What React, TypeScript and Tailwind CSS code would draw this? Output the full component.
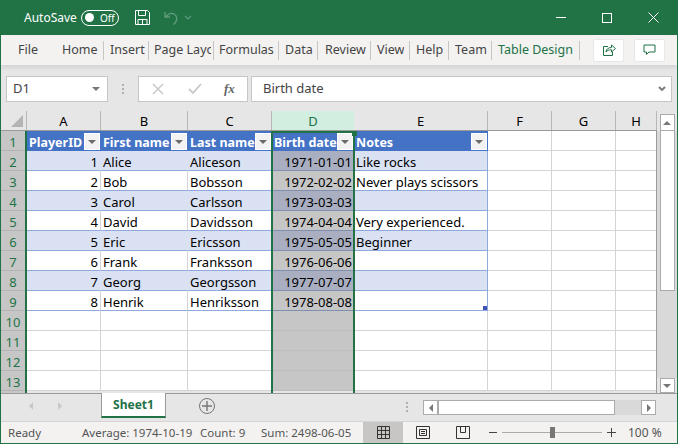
const font = { fontFamily: '"Noto Sans", sans-serif' };

const tabs = [
  { label: "Home", w: "w-[49px]", pl: "pl-[7px]" },
  { label: "Insert", w: "w-[45px]", pl: "pl-[6px]" },
  { label: "Page Layout", w: "w-[65px]", pl: "pl-[5px]" },
  { label: "Formulas", w: "w-[65px]", pl: "pl-[5px]" },
  { label: "Data", w: "w-[39px]", pl: "pl-[6px]" },
  { label: "Review", w: "w-[53px]", pl: "pl-[7px]" },
  { label: "View", w: "w-[39px]", pl: "pl-[6px]" },
  { label: "Help", w: "w-[39px]", pl: "pl-[6px]" },
  { label: "Team", w: "w-[43px]", pl: "pl-[6px]" },
];

const columns = [
  { name: "A", w: "w-[74px]" },
  { name: "B", w: "w-[87px]" },
  { name: "C", w: "w-[84px]" },
  { name: "D", w: "w-[82px]" },
  { name: "E", w: "w-[134px]" },
  { name: "F", w: "w-[64px]" },
  { name: "G", w: "w-[64px]" },
  { name: "H", w: "w-[41px]" },
];

const players = [
  ["1", "Alice", "Aliceson", "1971-01-01", "Like rocks"],
  ["2", "Bob", "Bobsson", "1972-02-02", "Never plays scissors"],
  ["3", "Carol", "Carlsson", "1973-03-03", ""],
  ["4", "David", "Davidsson", "1974-04-04", "Very experienced."],
  ["5", "Eric", "Ericsson", "1975-05-05", "Beginner"],
  ["6", "Frank", "Franksson", "1976-06-06", ""],
  ["7", "Georg", "Georgsson", "1977-07-07", ""],
  ["8", "Henrik", "Henriksson", "1978-08-08", ""],
];

function FilterButton() {
  return (
    <span className="absolute right-[1px] top-[2px] flex h-[17px] w-[16px] items-center justify-center bg-[#f2f2f2] border border-white">
      <span className="h-0 w-0 border-x-[4px] border-t-[4px] border-x-transparent border-t-[#6b6b6b]" />
    </span>
  );
}

function HeaderCell({ label, w }: { label: string; w: string }) {
  return (
    <div className={`${w} relative h-full bg-[#4472c4] pl-[2px] text-[12.5px] font-bold text-white leading-[24px] whitespace-nowrap`}>
      {label}
      <FilterButton />
    </div>
  );
}

function DataRow({ num, row }: { num: number; row: string[] }) {
  const band = num % 2 === 0;
  const tableBg = band ? "bg-[#d9e1f2]" : "bg-white";
  const line = "border-b border-[#8ea9db]";
  return (
    <div className="flex h-[20px] leading-[23px] text-black">
      <div className={`${columns[0].w} ${tableBg} ${line} border-r ${band ? "border-r-[#d9e1f2]" : "border-r-[#d4d4d4]"} pr-[2px] text-right`}>{row[0]}</div>
      <div className={`${columns[1].w} ${tableBg} ${line} border-r ${band ? "border-r-[#d9e1f2]" : "border-r-[#d4d4d4]"} pl-[2px]`}>{row[1]}</div>
      <div className={`${columns[2].w} ${tableBg} ${line} pl-[2px]`}>{row[2]}</div>
      <div className={`${columns[3].w} ${band ? "bg-[#a9afc0]" : "bg-[#c6c6c6]"} border-b border-[#7f8fb0] pr-[2px] text-right`}>{row[3]}</div>
      <div className={`${columns[4].w} ${tableBg} ${line} border-r border-r-[#8ea9db] pl-[2px] whitespace-nowrap relative`}>
        {row[4]}
        {num === 9 && <span className="absolute bottom-0 right-0 h-[4px] w-[4px] bg-[#3f51b5]" />}
      </div>
      <div className={`${columns[5].w} border-r border-b border-[#d4d4d4] bg-white`} />
      <div className={`${columns[6].w} border-r border-b border-[#d4d4d4] bg-white`} />
      <div className={`${columns[7].w} border-b border-[#d4d4d4] bg-white`} />
    </div>
  );
}

function EmptyRow() {
  return (
    <div className="flex h-[20px]">
      {columns.map((c) => (
        <div
          key={c.name}
          className={`${c.w} ${c.name === "D" ? "bg-[#c6c6c6] border-b border-[#bdbdbd]" : "bg-white border-r border-b border-[#d4d4d4]"}`}
        />
      ))}
    </div>
  );
}

export default function App() {
  return (
    <div className="flex h-[444px] w-[678px] flex-col overflow-hidden bg-[#e6e6e6] border-x border-b border-[#217346] text-[13px] text-[#444]" style={font}>
      {/* Title bar */}
      <div className="-mx-px flex h-[35px] shrink-0 items-center bg-[#217346] text-white">
        <span className="ml-[24px] w-[57px] shrink-0 text-[12px]">AutoSave</span>
        <div className="flex h-[16px] w-[38px] shrink-0 items-center rounded-full border border-white pl-[3px]">
          <span className="h-[9px] w-[9px] rounded-full bg-white" />
          <span className="ml-[6px] text-[10px] leading-none">Off</span>
        </div>
        <svg className="ml-[15px]" width="17" height="17" viewBox="0 0 17 17" fill="none" stroke="white" strokeWidth="1">
          <path d="M1.5 1.5h12l2 2v12h-14z" />
          <path d="M4.5 1.5v5h7v-5M4 15.500v-5h9v5M8.500 11v4" />
        </svg>
        <svg className="ml-[12px]" width="18" height="18" viewBox="0 0 18 18" fill="none" stroke="#5f9b7c" strokeWidth="1.4">
          <path d="M2 3v5h5M2.500 8C5 5 8 3.500 11 5c3.500 2 3.500 6 1 9l-1.500 1.500" />
        </svg>
        <svg className="ml-[3px]" width="8" height="6" viewBox="0 0 8 6" fill="none" stroke="#5f9b7c" strokeWidth="1.2">
          <path d="M1 1l3 3 3-3" />
        </svg>
        <div className="ml-auto flex items-center">
          <span className="mr-[36px] h-px w-[10px] bg-white" />
          <span className="mr-[36px] h-[10px] w-[10px] border border-white" />
          <svg className="mr-[19px]" width="11" height="11" viewBox="0 0 11 11" stroke="white" strokeWidth="1">
            <path d="M0.500 0.500l10 10M10.500 0.500l-10 10" />
          </svg>
        </div>
      </div>

      {/* Ribbon tabs */}
      <div className="relative flex h-[30px] shrink-0 items-center bg-[#f3f2f1] text-[12.5px] shadow-[0_3px_4px_rgba(0,0,0,0.08)]">
        <span className="ml-[17px] mt-px w-[37px] shrink-0">File</span>
        {tabs.map((t) => (
          <div key={t.label} className={`${t.w} ${t.pl} flex h-[19px] shrink-0 items-center whitespace-nowrap border-r border-[#c8c6c4] pr-[2px]`}>
            <span className="mt-px overflow-hidden">{t.label}</span>
          </div>
        ))}
        <div className="flex h-[19px] w-[88px] shrink-0 items-center whitespace-nowrap border-r border-[#c8c6c4] pl-[6px] text-[#217346]">
          <span className="mt-px">Table Design</span>
        </div>
        <div className="ml-[13px] flex h-[23px] w-[31px] items-center justify-center rounded-[2px] bg-white border border-[#e8e8e8]">
          <svg width="14" height="14" viewBox="0 0 14 14" fill="none" stroke="#217346" strokeWidth="1">
            <path d="M6 3.500H1.500v9h9V9M4 9c0-3 2.500-4.500 5.500-4.500V2l4 3.500-4 3.500V6.800C7 6.800 5 7.500 4 9z" />
          </svg>
        </div>
        <div className="ml-[10px] flex h-[23px] w-[31px] items-center justify-center rounded-[2px] bg-white border border-[#e8e8e8]">
          <svg width="13" height="12" viewBox="0 0 13 12" fill="none" stroke="#217346" strokeWidth="1">
            <path d="M1 1h11v7H6l-2.500 2.500V8H1z" />
          </svg>
        </div>
      </div>

      {/* Formula bar */}
      <div className="flex h-[46px] shrink-0 items-start pt-[11px]">
        <div className="ml-[5px] flex h-[26px] w-[102px] items-center justify-between border border-[#c6c6c6] bg-white pl-[6px] pr-[7px]">
          D1
          <span className="h-0 w-0 border-x-[4px] border-t-[4px] border-x-transparent border-t-[#777]" />
        </div>
        <div className="mx-[14px] mt-[8px] flex flex-col gap-[2px]">
          <span className="h-[2px] w-[2px] bg-[#b0b0b0]" />
          <span className="h-[2px] w-[2px] bg-[#b0b0b0]" />
          <span className="h-[2px] w-[2px] bg-[#b0b0b0]" />
        </div>
        <div className="flex h-[26px] w-[110px] items-center border border-[#c6c6c6] bg-white pl-[13px]">
          <svg width="12" height="12" viewBox="0 0 12 12" stroke="#c8c8c8" strokeWidth="1.5">
            <path d="M1 1l10 10M11 1L1 11" />
          </svg>
          <svg className="ml-[24px]" width="14" height="12" viewBox="0 0 14 12" fill="none" stroke="#c8c8c8" strokeWidth="1.8">
            <path d="M1 6l4 4 8-9" />
          </svg>
          <span className="ml-[22px] text-[13px] font-bold italic text-[#666]" style={{ fontFamily: '"Liberation Serif", serif' }}>
            fx
          </span>
        </div>
        <div className="ml-[3px] flex h-[26px] w-[421px] items-center justify-between border border-[#c6c6c6] bg-white pl-[11px] pr-[5px]">
          Birth date
          <svg width="8" height="6" viewBox="0 0 8 6" fill="none" stroke="#777" strokeWidth="1.8">
            <path d="M1 1l3 3 3-3" />
          </svg>
        </div>
      </div>

      {/* Sheet area */}
      <div className="flex min-h-0 flex-1">
        <div className="flex w-[656px] shrink-0 flex-col border-r border-[#9a9a9a]">
          <div className="relative flex h-[20px] shrink-0 border-b border-[#9a9a9a] leading-[20px] text-black">
            <div className="relative w-[26px] shrink-0 border-r border-[#b8b8b8]">
              <span className="absolute bottom-[3px] right-[3px] h-0 w-0 border-b-[12px] border-l-[12px] border-b-[#b4b4b4] border-l-transparent" />
            </div>
            {columns.map((c) => (
              <div
                key={c.name}
                className={`${c.w} shrink-0 text-center ${c.name === "D" ? "bg-[#d2eee0] text-[#217346]" : "border-r border-[#b8b8b8]"}`}
              >
                {c.name}
              </div>
            ))}
          </div>
          <div className="relative flex min-h-0 flex-1 overflow-hidden">
            <div className="w-[26px] shrink-0 border-r-2 border-[#217346] bg-[#c6c6c6] text-[#217346]">
              {Array.from({ length: 13 }).map((_, i) => (
                <div key={i} className="h-[20px] border-b border-[#b4b4b4] text-center leading-[23px]">
                  {i + 1}
                </div>
              ))}
            </div>
            <div className="flex-1">
              <div className="flex h-[20px]">
                <HeaderCell label="PlayerID" w={columns[0].w} />
                <HeaderCell label="First name" w={columns[1].w} />
                <HeaderCell label="Last name" w={columns[2].w} />
                <HeaderCell label="Birth date" w={columns[3].w} />
                <HeaderCell label="Notes" w={columns[4].w} />
                <div className={`${columns[5].w} border-r border-b border-[#d4d4d4] bg-white`} />
                <div className={`${columns[6].w} border-r border-b border-[#d4d4d4] bg-white`} />
                <div className={`${columns[7].w} border-b border-[#d4d4d4] bg-white`} />
              </div>
              {players.map((row, i) => (
                <DataRow key={row[0]} num={i + 2} row={row} />
              ))}
              {Array.from({ length: 4 }).map((_, i) => (
                <EmptyRow key={i} />
              ))}
            </div>
            {/* Selected column outline */}
            <div className="absolute bottom-0 left-[270px] top-0 w-[84px] border-x-2 border-t-2 border-[#217346]">
              <span className="absolute right-[-4px] top-[-2px] h-[5px] w-[5px] bg-[#217346]" />
            </div>
          </div>
        </div>

        {/* Vertical scrollbar */}
        <div className="flex w-[20px] shrink-0 flex-col items-center pt-[3px]">
          <div className="flex h-[17px] w-[15px] shrink-0 items-center justify-center border border-[#ababab] bg-white">
            <span className="h-0 w-0 border-x-[4px] border-b-[4px] border-x-transparent border-b-[#777]" />
          </div>
          <div className="flex w-full flex-1 flex-col items-center bg-[#d9d9d9]">
            <div className="h-[160px] w-[15px] border border-[#ababab] border-t-0 bg-white" />
          </div>
          <div className="flex h-[15px] w-[15px] shrink-0 items-center justify-center border border-[#ababab] bg-white">
            <span className="h-0 w-0 border-x-[4px] border-t-[4px] border-x-transparent border-t-[#777]" />
          </div>
        </div>
      </div>

      {/* Sheet tabs */}
      <div className="flex h-[28px] shrink-0 items-start border-t border-[#9a9a9a]">
        <span className="ml-[28px] mt-[8px] h-0 w-0 border-y-[4px] border-r-[4px] border-y-transparent border-r-[#c8c8c8]" />
        <span className="ml-[25px] mt-[8px] h-0 w-0 border-y-[4px] border-l-[4px] border-y-transparent border-l-[#c8c8c8]" />
        <div className="-mt-px ml-[39px] flex h-[25px] w-[65px] items-center justify-center border-x border-b-2 border-x-[#9a9a9a] border-b-[#217346] bg-white text-[12px] font-bold text-[#217346]">
          Sheet1
        </div>
        <div className="ml-[33px] mt-[4px] flex h-[16px] w-[16px] items-center justify-center rounded-full border border-[#777]">
          <svg width="10" height="10" viewBox="0 0 10 10" stroke="#777" strokeWidth="1.4">
            <path d="M5 0v10M0 5h10" />
          </svg>
        </div>
        <div className="ml-[191px] mt-[8px] flex flex-col gap-[2px]">
          <span className="h-[2px] w-[2px] bg-[#b0b0b0]" />
          <span className="h-[2px] w-[2px] bg-[#b0b0b0]" />
          <span className="h-[2px] w-[2px] bg-[#b0b0b0]" />
        </div>
        <div className="ml-[15px] mt-[6px] flex h-[15px] w-[233px] bg-[#d9d9d9]">
          <div className="flex w-[15px] items-center justify-center border border-[#ababab] bg-white">
            <span className="h-0 w-0 border-y-[4px] border-r-[4px] border-y-transparent border-r-[#777]" />
          </div>
          <div className="w-[177px] border border-[#ababab] bg-white" />
          <div className="ml-auto flex w-[15px] items-center justify-center border border-[#ababab] bg-white">
            <span className="h-0 w-0 border-y-[4px] border-l-[4px] border-y-transparent border-l-[#777]" />
          </div>
        </div>
      </div>

      {/* Status bar */}
      <div className="flex h-[22px] shrink-0 items-center bg-[#f3f2f1] border-t border-[#d4d4d4] text-[11.5px] text-[#555]">
        <span className="ml-[7px] w-[74px] shrink-0">Ready</span>
        <span className="w-[118px] shrink-0 whitespace-nowrap">Average: 1974-10-19</span>
        <span className="w-[61px] shrink-0 whitespace-nowrap">Count: 9</span>
        <span className="w-[102px] shrink-0 whitespace-nowrap">Sum: 2498-06-05</span>
        <div className="flex h-full w-[40px] shrink-0 items-center justify-center bg-[#c8c6c4]">
          <svg width="13" height="13" viewBox="0 0 13 13" fill="none" stroke="#333" strokeWidth="1">
            <path d="M0.500 0.500h12v12h-12zM4.500 0.500v12M8.500 0.500v12M0.500 4.500h12M0.500 8.500h12" />
          </svg>
        </div>
        <svg className="ml-[13px] shrink-0" width="14" height="13" viewBox="0 0 14 13" fill="none" stroke="#333" strokeWidth="1">
          <path d="M0.500 0.500h13v12h-13zM3.500 3.500h7v6h-7zM5 5.500h4M5 7.500h4" />
        </svg>
        <svg className="ml-[26px] shrink-0" width="14" height="13" viewBox="0 0 14 13" fill="none" stroke="#333" strokeWidth="1">
          <path d="M0.500 0.500h13v12h-13zM4.500 0.500v6h5v-6" />
        </svg>
        <span className="ml-[19px] h-px w-[8px] shrink-0 bg-[#444]" />
        <div className="relative ml-[5px] h-px w-[100px] shrink-0 bg-[#aaa]">
          <span className="absolute left-[48px] top-[-5px] h-[11px] w-[5px] bg-[#777]" />
        </div>
        <svg className="ml-[5px] shrink-0" width="9" height="9" viewBox="0 0 9 9" stroke="#444" strokeWidth="1">
          <path d="M4.500 0v9M0 4.500h9" />
        </svg>
        <span className="ml-[12px] whitespace-nowrap text-[12px]">100 %</span>
      </div>
    </div>
  );
}
